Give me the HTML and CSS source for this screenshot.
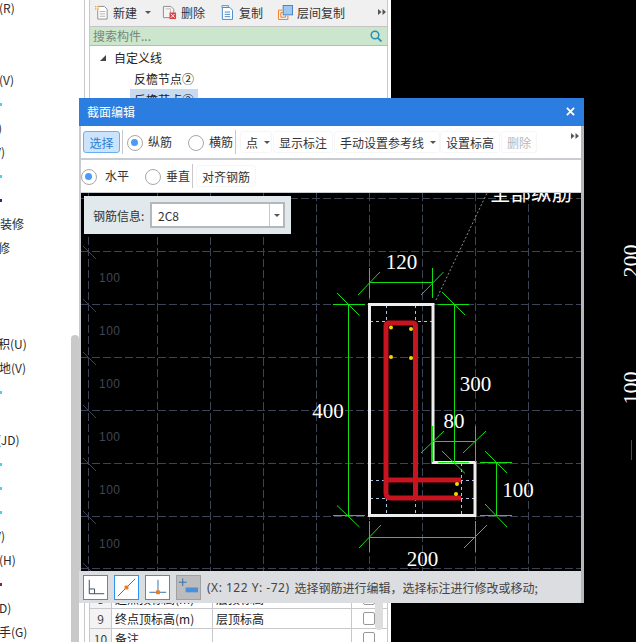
FILE: index.html
```html
<!DOCTYPE html>
<html lang="zh">
<head>
<meta charset="utf-8">
<title>截面编辑</title>
<link rel="stylesheet" href="styles.css">
</head>
<body>
<div class="desktop">
  <aside class="side">
    <div class="side-list">
      <div class="srow cut1">(R)</div><div class="srow"></div><div class="srow"></div>
      <div class="srow cut1">(V)</div>
      <div class="srow"><i class="dot"></i></div>
      <div class="srow cut-p">)</div>
      <div class="srow cut-v">V)</div>
      <div class="srow"><i class="dot"></i></div>
      <div class="srow"><i class="dot dark"></i></div>
      <div class="srow">装修</div>
      <div class="srow cut2">修</div>
      <div class="srow"></div><div class="srow"></div><div class="srow"></div>
      <div class="srow cut2">积(U)</div>
      <div class="srow cut1">地(V)</div>
      <div class="srow"><i class="dot"></i></div>
      <div class="srow"></div>
      <div class="srow cut3">(JD)</div>
      <div class="srow"><i class="dot"></i></div>
      <div class="srow"><i class="dot"></i></div>
      <div class="srow"><i class="dot"></i></div>
      <div class="srow cut-v">V)</div>
      <div class="srow cut1">(H)</div>
      <div class="srow"><i class="dot red"></i></div>
      <div class="srow cut1">D)</div>
      <div class="srow cut1">手(G)</div>
    </div>
    <div class="side-scroll"></div>
  </aside>

  <section class="panel">
    <div class="panel-box">
      <div class="ptools">
        <span class="ptool">
          <svg class="pico" viewBox="0 0 16 16"><path d="M4 1.5h7l3 3v10.500H4z" fill="#fff" stroke="#8a8a8a"/><path d="M6 7h6M6 9.500h6M6 12h6" stroke="#b0b0b0"/><path d="M1 1h4v4H1z" fill="#f5a33c"/><path d="M3 0v6M0 3h6" stroke="#fff" stroke-width=".8"/></svg>新建<i class="caret pcaret"></i>
        </span>
        <span class="ptool">
          <svg class="pico" viewBox="0 0 16 16"><path d="M1.500 1.500h8l3 3v9h-11z" fill="#f4f4f4" stroke="#8a8a8a"/><path d="M4 4h5v7" fill="none" stroke="#bbb"/><rect x="8" y="8" width="7" height="7" fill="#d9444a"/><path d="M9.500 9.500l4 4M13.500 9.500l-4 4" stroke="#fff"/></svg>删除
        </span>
        <span class="ptool">
          <svg class="pico small" viewBox="0 0 13 16"><path d="M1 .5h7v2H1z" fill="#fff" stroke="#6b8fb5"/><path d="M1.500 2.500h8l3 3v10h-11z" fill="#fff" stroke="#3f83c4"/><path d="M4 7.500h6M4 10h6M4 12.500h6" stroke="#3f83c4"/></svg>复制
        </span>
        <span class="ptool">
          <svg class="pico" viewBox="0 0 16 16"><rect x="5.500" y=".5" width="10" height="10" fill="#9fc8f0" stroke="#3f83c4"/><path d="M.5 15.500V5.500h4M.5 15.500h10v-4" fill="none" stroke="#f07a1a"/><path d="M3 13V8h2M3 13h5v-2" fill="none" stroke="#f07a1a"/></svg>层间复制
        </span>
        <svg class="more pmore" viewBox="0 0 8 8"><path d="M0 1l3.500 3L0 7zM4.500 1L8 4 4.500 7z" fill="#555"/></svg>
      </div>
      <div class="psearch">
        <span>搜索构件...</span>
        <svg class="lens" viewBox="0 0 12 12"><circle cx="5" cy="5" r="3.800" fill="none" stroke="#2a8fb5" stroke-width="1.500"/><path d="M7.800 7.800L11.500 11.500" stroke="#2a8fb5" stroke-width="1.800"/></svg>
      </div>
      <div class="tree">
        <div class="tnode"><i class="tri"></i>自定义线</div>
        <div class="tleaf"><span>反檐节点②</span></div>
        <div class="tleaf"><span class="active">反檐节点③</span></div>
      </div>
      <div class="ptable">
        <div class="trow"><span class="cn">8</span><span class="cname">起点顶标高(m)</span><span class="cval">层顶标高</span><span class="cchk"><i></i></span></div>
        <div class="trow"><span class="cn">9</span><span class="cname">终点顶标高(m)</span><span class="cval">层顶标高</span><span class="cchk"><i></i></span></div>
        <div class="trow"><span class="cn">10</span><span class="cname">备注</span><span class="cval"></span><span class="cchk"><i></i></span></div>
        <div class="tscroll"></div>
      </div>
    </div>
  </section>

  <div class="backdrop">
    <span class="rot rot200">200</span>
    <span class="rot rot100">100</span>
    <i class="redtick"></i>
  </div>

  <div class="dialog">
    <header class="dtitle">
      <span>截面编辑</span>
      <svg class="close" viewBox="0 0 10 10"><path d="M1 1l8 8M9 1L1 9" stroke="#fff" stroke-width="2"/></svg>
    </header>
    <div class="dbar first">
      <button class="btn selected">选择</button>
      <i class="sep"></i>
      <label class="radio on gap5">纵筋</label>
      <label class="radio gap15">横筋</label>
      <i class="sep s2"></i>
      <button class="btn b-dot">点<i class="caret"></i></button>
      <button class="btn">显示标注</button>
      <button class="btn b-ref">手动设置参考线<i class="caret"></i></button>
      <button class="btn">设置标高</button>
      <button class="btn off">删除</button>
      <svg class="more dmore" viewBox="0 0 8 8"><path d="M0 1l3.500 3L0 7zM4.500 1L8 4 4.500 7z" fill="#555"/></svg>
    </div>
    <div class="dbar second">
      <label class="radio on">水平</label>
      <label class="radio gap15">垂直</label>
      <i class="sep s3"></i>
      <button class="btn">对齐钢筋</button>
    </div>
    <div class="canvas">
      <svg class="draw" viewBox="81 193 500 378" width="500" height="378">
        <g class="grid">
          <path d="M88.500 193V571M157.500 193V571M210.500 193V571M263.500 193V571M316.500 193V571M369.500 193V571M422.500 193V571M475.500 193V571M528.500 193V571M581.500 193V571"/>
          <path d="M81 198.500H581M81 251.500H581M81 304.500H581M81 357.500H581M81 410.500H581M81 463.500H581M81 516.500H581M81 568.500H581"/>
        </g>
        <path class="ticks" d="M83 246l13 13M83 299l13 13M83 352l13 13M83 405l13 13M83 458l13 13M83 511l13 13M83 563l8 8"/>
        <g class="rule">
          <text x="99" y="282">100</text><text x="99" y="335">100</text><text x="99" y="388">100</text>
          <text x="99" y="441">100</text><text x="99" y="494">100</text><text x="99" y="548">100</text>
        </g>
        <path class="leader" d="M436 300L487 193"/>
        <text class="callout" x="490" y="201">全部纵筋</text>

        <path class="refs" d="M370 321.500H433M386.500 305V321M415.500 305V321M370 480.500H474M370 498.500H474M386.500 498V515M415.500 498V515M461.500 463V515"/>
        <path class="outline" d="M369.500 304.500H433V462.500H475V515.500H369.500Z"/>
        <path class="rebar" d="M461 480H386M461 498H391Q386 498 386 493V326Q386 323 389 323H412Q415.500 323 415.500 326V498"/>
        <g class="pts">
          <circle cx="391" cy="327.500" r="2"/><circle cx="411" cy="329" r="2"/>
          <circle cx="391" cy="357" r="2"/><circle cx="411" cy="358" r="2"/>
          <circle cx="457" cy="484" r="2"/><circle cx="456" cy="494" r="2"/>
        </g>

        <path class="dim" d="M369.500 268V298M432.500 268V298M369 282.500H433M358 295l22-23M421 295l22.500-23"/>
        <path class="dim" d="M333 304.500H365M348.500 304V515M333 515.500H365M337 293l22.500 22.500M337 505.500L359.500 527"/>
        <path class="dim" d="M438 304.500H469M454.500 304V462M438 462.500H469M442 292l23 23M442 451l23 22.500"/>
        <path class="dim" d="M432.500 426V462M475.500 426V462M433 441.500H475M421 453l23-22M463 453l23-22"/>
        <path class="dim" d="M480 462.500H512M496.500 462V515M480 515.500H512M485 451l22 22M485 504l22 23"/>
        <path class="dim" d="M369.500 521V552M475.500 521V552M369 537.500H475M359 548l22-23M464 548l23-23"/>

        <g class="lbl">
          <text x="401.500" y="269">120</text>
          <text x="328" y="418">400</text>
          <text x="475.500" y="391">300</text>
          <text x="454" y="428">80</text>
          <text x="518" y="497">100</text>
          <text x="422.500" y="566">200</text>
        </g>
      </svg>
      <div class="info">
        <span class="info-label">钢筋信息:</span>
        <div class="combo"><span class="combo-val">2C8</span><span class="combo-arrow"><i class="caret"></i></span></div>
      </div>
    </div>
    <footer class="status">
      <span class="sbtn">
        <svg viewBox="0 0 24 24"><path d="M5.500 4V18.500H21M5.500 13.500H11V18.500" fill="none" stroke="#3b4a5c"/></svg>
      </span>
      <span class="sbtn">
        <svg viewBox="0 0 24 24"><path d="M3 21L21 3" stroke="#2f6fb0"/><rect x="10" y="10" width="4" height="4" fill="#f07a1a"/></svg>
      </span>
      <span class="sbtn">
        <svg viewBox="0 0 24 24"><path d="M3.500 17H21M12.500 4V17" fill="none" stroke="#2f6fb0"/><rect x="10.500" y="15" width="4" height="4" fill="#f07a1a"/></svg>
      </span>
      <span class="sbtn mute">
        <svg viewBox="0 0 24 24"><path d="M2 6.500H10M6 2.500V10.500" stroke="#2f6fb0"/><rect x="9" y="12" width="13" height="5" fill="#4a8fd8"/></svg>
      </span>
      <span class="coord">(X: 122 Y: -72)</span>
      <span class="hint">选择钢筋进行编辑，选择标注进行修改或移动;</span>
    </footer>
  </div>
</div>
</body>
</html>
```

FILE: styles.css
```css
* { box-sizing: border-box; }
html, body { margin: 0; padding: 0; }
body {
  width: 636px;
  height: 642px;
  overflow: hidden;
  background: #000;
  font-family: "Noto Sans CJK SC", "Noto Sans", sans-serif;
  font-size: 12px;
  color: #222;
}
i { font-style: normal; display: block; }

.desktop {
  position: relative;
  display: flex;
  width: 636px;
  height: 642px;
  overflow: hidden;
}

/* left clipped list */
.side {
  position: relative;
  width: 80px;
  flex: none;
  background: #fff;
  overflow: hidden;
}
.side-list { margin-top: -4px; }
.srow { display: flow-root; height: 24px; line-height: 24px; white-space: nowrap; color: #2a2a2a; font-size: 12px; }
.cut1 { text-indent: -1px; }
.cut2 { text-indent: -2px; }
.cut3 { text-indent: -3px; }
.cut-p { text-indent: -2px; }
.cut-v { text-indent: -6px; }
.dot { width: 2px; height: 3px; margin-top: 11px; background: #45d0f5; }
.dot.dark { background: #30306a; }
.dot.red { background: #8a1f4a; }
.side-scroll {
  position: absolute;
  left: 71px;
  top: 335px;
  width: 8px;
  bottom: 0;
  background: #c9c9c9;
  border-radius: 4px 4px 0 0;
}

/* component panel */
.panel {
  width: 311px;
  flex: none;
  background: #fff;
  padding-left: 4px;
  padding-right: 3px;
}
.panel-box {
  height: 642px;
  border-left: 1px solid #c8c8cc;
  padding-left: 4px;
}
.panel-box > * { border-left: 1px solid #c8c8cc; border-right: 1px solid #c8c8cc; }
.ptools {
  height: 27px;
  width: 299px;
  background: #f0f0f0;
  border-bottom: 1px solid #c4c4c4;
  display: flex;
  align-items: center;
  padding: 0 0 2px 4px;
  gap: 0;
}
.ptool { display: flex; align-items: center; color: #333; }
.ptool:nth-child(1) { width: 68px; }
.ptool:nth-child(2) { width: 59px; }
.ptool:nth-child(3) { width: 57px; }
.pico { width: 15px; height: 15px; margin-right: 4px; }
.pico.small { width: 12px; margin-right: 6px; }
.caret {
  width: 0;
  height: 0;
  border-left: 3px solid transparent;
  border-right: 3px solid transparent;
  border-top: 3px solid #555;
}
.pcaret { margin-left: 8px; }
.more { width: 8px; height: 8px; }
.pmore { margin-left: auto; margin-right: 1px; }
.psearch {
  height: 19px;
  width: 299px;
  background: #cbe6cd;
  border-bottom: 1px solid #b8b8b8;
  color: #76867a;
  line-height: 18px;
  padding: 0 5px 0 3px;
  display: flex;
  justify-content: space-between;
  align-items: center;
}
.lens { width: 12px; height: 12px; }
.tree { width: 299px; height: 543px; padding-top: 1px; }
.tnode, .tleaf { height: 21px; line-height: 21px; white-space: nowrap; color: #222; }
.tnode { display: flex; align-items: center; padding-left: 24px; }
.tri {
  width: 0;
  height: 0;
  margin-left: -14px;
  margin-right: 8px;
  border-left: 6px solid transparent;
  border-bottom: 6px solid #444;
}
.tleaf { padding-left: 40px; }
.tleaf span { display: inline-block; height: 21px; padding: 0 4px; margin-left: 0; }
.tleaf .active { background: #c8daf0; }
.ptable { position: relative; width: 299px; }
.trow {
  display: flex;
  height: 20px;
  line-height: 19px;
  border-bottom: 1px solid #c8c8cc;
  white-space: nowrap;
}
.trow > span { border-right: 1px solid #c8c8cc; padding-left: 3px; }
.cn { width: 22px; background: #f3f3f3; text-align: center; padding-left: 0 !important; color: #444; }
.cname { width: 101px; }
.cval { width: 139px; }
.cchk { width: 35px; border-right: 0 !important; padding: 0 0 0 11px !important; }
.cchk i { width: 12px; height: 13px; margin-top: 3px; border: 1px solid #999; background: #fff; border-radius: 2px; }
.tscroll {
  position: absolute;
  right: 4px;
  top: 0;
  width: 8px;
  height: 41px;
  background: #ddd;
  border-radius: 0 0 4px 4px;
}

.backdrop { flex: 1; position: relative; background: #000; }
.rot {
  position: absolute;
  font-family: "Liberation Serif", serif;
  font-size: 22px;
  line-height: 22px;
  color: #fff;
  transform: rotate(-90deg);
  transform-origin: center;
}
.rot200 { left: 223px; top: 250px; }
.rot100 { left: 223px; top: 377px; }
.redtick { position: absolute; left: 240px; top: 440px; width: 1px; height: 20px; background: #c8141e; }

/* dialog window */
.dialog {
  position: absolute;
  left: 79px;
  top: 98px;
  width: 505px;
  height: 505px;
  background: #c8ccd0;
  border-left: 2px solid #c8ccd0;
  border-right: 3px solid #b4b8bd;
  display: flex;
  flex-direction: column;
}
.dtitle {
  height: 28px;
  flex: none;
  margin: 0 -3px 0 -2px;
  background: #2b7de0;
  color: #fff;
  font-size: 12px;
  display: flex;
  align-items: center;
  justify-content: space-between;
  padding: 0 9px 2px 8px;
}
.close { width: 9px; height: 9px; }
.dbar {
  flex: none;
  height: 32px;
  background: #fff;
  display: flex;
  align-items: center;
}
.dbar.first { padding-left: 2px; }
.dbar.second { margin-top: 2px; margin-bottom: 1px; padding-left: 0; }
.btn {
  height: 22px;
  padding: 0 5px;
  border: 1px solid #f6f6f6;
  border-radius: 3px;
  background: #fff;
  color: #333;
  font: inherit;
  display: flex;
  align-items: center;
  white-space: nowrap;
}
.btn.selected {
  width: 37px;
  padding: 0;
  justify-content: center;
  background: #cce4fb;
  border-color: #6ab0f0;
  color: #2d7fd0;
}
.btn.off { color: #b8b8b8; margin-left: 1px; }
.b-dot { width: 32px; margin-right: 1px; }
.b-dot .caret, .b-ref .caret { margin-left: 6px; }
.b-ref { margin-left: 1px; width: 106px; }
.sep { width: 1px; height: 24px; background: #c8c8cc; flex: none; }
.dbar.first .sep { margin: 0 4px 0 2px; }
.dbar.first .sep.s2 { margin: 0 4px 0 2px; }
.dbar.second .sep.s3 { margin: 0 3px 0 2px; }
.radio {
  position: relative;
  display: block;
  padding-left: 21px;
  line-height: 20px;
  color: #333;
  white-space: nowrap;
}
.radio::before {
  content: "";
  position: absolute;
  left: 0;
  top: 3px;
  width: 14px;
  height: 14px;
  border: 1.500px solid #a8a8a8;
  border-radius: 50%;
  background: #fff;
}
.radio.on::after {
  content: "";
  position: absolute;
  left: 3.500px;
  top: 6.500px;
  width: 7px;
  height: 7px;
  border-radius: 50%;
  background: #4a9bf5;
}
.dbar.second .radio.on { padding-left: 24px; }
.gap15 { margin-left: 16px; }
.dmore { margin-left: auto; margin-right: 2px; margin-top: -12px; }

.canvas { position: relative; flex: none; height: 378px; background: #000; overflow: hidden; }
.draw { display: block; }
.grid path { fill: none; stroke: #3b4354; stroke-width: 1; stroke-dasharray: 8 3; }
.ticks { fill: none; stroke: #3b4354; }
.rule text { fill: #3f4654; font: 12px "Liberation Sans", sans-serif; letter-spacing: .5px; }
.leader { fill: none; stroke: #8c8c8c; stroke-dasharray: 2 2; }
.callout { fill: #fff; font: 20.5px "Noto Sans CJK SC", sans-serif; }
.refs { fill: none; stroke: #a8c4e8; stroke-dasharray: 3 3; }
.outline { fill: none; stroke: #eee; stroke-width: 3; }
.rebar { fill: none; stroke: #c8141e; stroke-width: 5; }
.pts circle { fill: #f5d800; }
.dim { fill: none; stroke: #10e010; stroke-width: 1; }
.lbl text { fill: #fff; font: 21px "Liberation Serif", serif; text-anchor: middle; }

.info {
  position: absolute;
  left: 3px;
  top: 3px;
  width: 207px;
  height: 38px;
  background: #e1e9ec;
  display: flex;
  align-items: center;
  padding-left: 9px;
  color: #333;
}
.info-label { width: 57px; flex: none; }
.combo {
  display: flex;
  width: 135px;
  height: 26px;
  border: 2px solid #b5b8ba;
  background: #fff;
  align-items: center;
}
.combo-val { flex: 1; padding-left: 6px; font-size: 12px; color: #333; }
.combo-arrow {
  width: 14px;
  height: 22px;
  border-left: 1px solid #c8c8c8;
  display: flex;
  align-items: center;
  justify-content: center;
}

.status {
  height: 32px;
  flex: none;
  margin-left: -2px;
  background: #dcdde0;
  display: flex;
  align-items: center;
  padding-left: 4px;
  white-space: nowrap;
  color: #444;
}
.sbtn {
  width: 25px;
  height: 25px;
  margin-right: 6px;
  background: #fff;
  border: 1px solid #2b96f0;
  flex: none;
}
.sbtn svg { display: block; width: 23px; height: 23px; }
.sbtn.mute { background: #bcbcbe; border: 1px solid #a0a0a2; }
.coord { font-family: "Noto Sans", sans-serif; font-size: 12px; letter-spacing: .5px; }
.hint { margin-left: 5px; }
```
